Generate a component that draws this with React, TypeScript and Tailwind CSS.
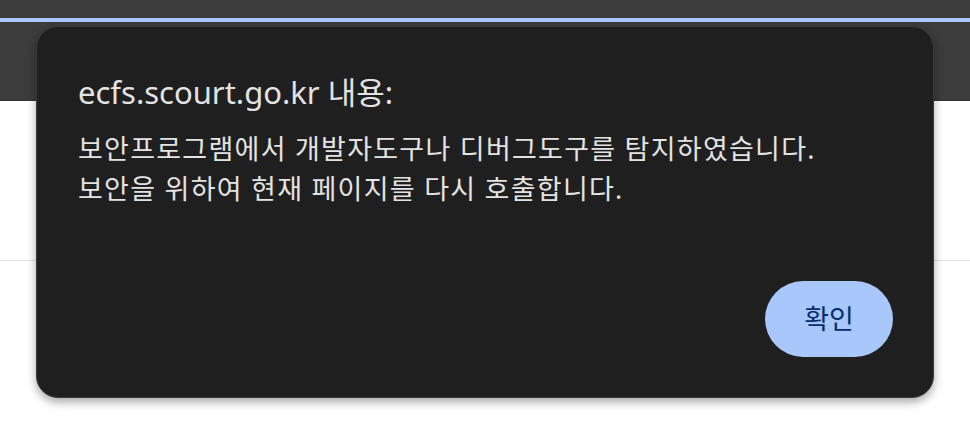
import React from 'react';

const font = { fontFamily: '"Segoe UI", "Noto Sans", "Noto Sans CJK KR", sans-serif' };

const App: React.FC = () => {
  return (
    <div className="relative w-[970px] h-[426px] overflow-hidden bg-white" style={font}>
      {/* 브라우저 상단 영역 */}
      <div className="h-[18px] bg-[#3c3c3c]" />
      <div className="h-[4px] bg-[#a8c7fa]" />
      <div className="h-[79px] bg-[#3c3c3c] border-b border-[#333333]" />
      <div className="h-[160px] bg-white border-b border-[#e3e3e3]" />

      {/* 알림 대화상자 */}
      <div className="absolute left-[36px] top-[26px] w-[898px] h-[372px] rounded-[22px] bg-[#1f1f1f] border border-[#3a3a3a] shadow-[0_4px_10px_rgba(0,0,0,0.35)] flex flex-col pl-[41px] pr-[40px] pb-[40px] pt-[45px]">
        <h1 className="text-[31px] leading-[40px] text-[#e3e3e3] font-normal">ecfs.scourt.go.kr 내용:</h1>
        <div className="mt-[17px] text-[27px] leading-[40px] text-[#e3e3e3] tracking-[1.25px]">
          <p>보안프로그램에서 개발자도구나 디버그도구를 탐지하였습니다.</p>
          <p>보안을 위하여 현재 페이지를 다시 호출합니다.</p>
        </div>
        <div className="mt-auto flex justify-end">
          <button className="w-[128px] h-[76px] rounded-full bg-[#a8c7fa] text-[#062e6f] text-[27px]">확인</button>
        </div>
      </div>
    </div>
  );
};

export default App;
